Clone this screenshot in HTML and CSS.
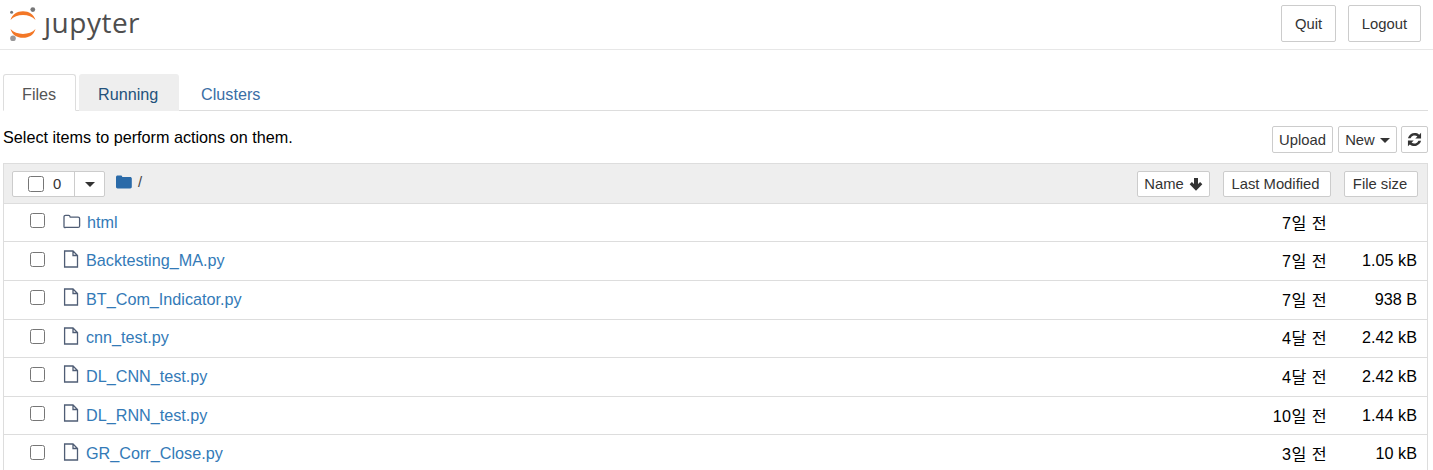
FILE: index.html
```html
<!DOCTYPE html>
<html lang="en">

<head>
    <meta charset="UTF-8">
    <title>Home Page - Select or create a notebook</title>
    <link rel="stylesheet" href="styles.css">
</head>

<body>
    <!-- Header -->
    <header class="site-header">
        <a class="logo" href="#">
            <svg class="logo-mark" viewBox="0 0 30 36" width="30" height="36">
                <path d="M2.500 15C4.200 9 9 6.200 15 6.200S25.800 9 27.500 15C24.400 11.600 20 10.100 15 10.100S5.600 11.600 2.500 15z" fill="#f37726" />
                <path d="M2.500 24C4.200 30 9 32.800 15 32.800S25.800 30 27.500 24C24.400 27.400 20 28.900 15 28.900S5.600 27.400 2.500 24z" fill="#f37726" />
                <circle cx="24.800" cy="4.600" r="2.400" fill="#767677" />
                <circle cx="3.600" cy="7.200" r="1.500" fill="#767677" />
                <circle cx="5" cy="33.400" r="2.800" fill="#989798" />
            </svg>
            <span class="logo-text"><span class="logo-j">j</span>upyter</span>
        </a>
        <div class="header-btns">
            <button class="btn btn-quit">Quit</button>
            <button class="btn btn-logout">Logout</button>
        </div>
    </header>

    <main class="container">
        <!-- Tabs -->
        <ul class="tabs">
            <li class="tab active"><a href="#">Files</a></li>
            <li class="tab muted"><a href="#">Running</a></li>
            <li class="tab"><a href="#">Clusters</a></li>
        </ul>

        <!-- Toolbar -->
        <div class="toolbar">
            <span class="toolbar-text">Select items to perform actions on them.</span>
            <div class="toolbar-btns">
                <button class="btn btn-upload">Upload</button>
                <button class="btn btn-new">New <span class="caret"></span></button>
                <button class="btn btn-refresh" aria-label="Refresh">
                    <svg viewBox="0 0 16 16" width="15" height="15">
                        <path d="M15 .8v6.200H8.800l2.300-2.300A4.700 4.700 0 0 0 3.800 6.600H1a7.400 7.400 0 0 1 12-3.800z" fill="#333" />
                        <path d="M1 15.200V9h6.200l-2.300 2.300a4.700 4.700 0 0 0 7.300-1.900H15a7.400 7.400 0 0 1-12 3.800z" fill="#333" />
                    </svg>
                </button>
            </div>
        </div>

        <!-- File list -->
        <section class="file-list">
            <div class="list-header">
                <div class="select-group">
                    <label class="select-count"><input type="checkbox" class="check-all"> <span>0</span></label>
                    <span class="select-drop"><span class="caret"></span></span>
                </div>
                <svg class="crumb-icon" viewBox="0 0 16 14" width="16" height="14">
                    <path d="M0 2.200C0 1.200.7.500 1.600.500h3.200c.9 0 1.500.7 1.500 1.500h7.900c.9 0 1.600.700 1.600 1.600v8.200c0 .9-.7 1.600-1.600 1.600H1.600C.7 13.400 0 12.700 0 11.800z" fill="#2a6aa8" />
                </svg>
                <span class="crumb-sep">/</span>
                <div class="sort-btns">
                    <button class="btn btn-sort btn-name">Name
                        <svg viewBox="0 0 14 14" width="14" height="14">
                            <path d="M7 1v9.500" fill="none" stroke="#333" stroke-width="4" />
                            <path d="M1.800 6.200l5.200 5.200 5.200-5.200" fill="none" stroke="#333" stroke-width="3.200" />
                        </svg>
                    </button>
                    <button class="btn btn-sort btn-modified">Last Modified</button>
                    <button class="btn btn-sort btn-size">File size</button>
                </div>
            </div>

            <div class="row row-folder">
                <input type="checkbox" class="row-check">
                <svg class="row-icon" viewBox="0 0 18 15" width="18" height="15">
                    <path d="M1 3c0-1 .7-1.600 1.500-1.600h3.200c.9 0 1.300.8 1.500 1.700h7.900c.9 0 1.500.7 1.500 1.500v7.300c0 .9-.7 1.500-1.500 1.500H2.500C1.700 13.900 1 13.300 1 12.400z" fill="none" stroke="#4f5d75" stroke-width="1.300" />
                </svg>
                <a class="row-name" href="#">html</a>
                <span class="row-date">7일 전</span>
                <span class="row-size"></span>
            </div>
            <div class="row">
                <input type="checkbox" class="row-check">
                <svg class="row-icon" viewBox="0 0 16 18" width="16" height="18">
                    <path d="M1.600 1h8.400l4.500 4.500v11.500H1.600zM10 1v4.500h4.500" fill="none" stroke="#4f5d75" stroke-width="1.300" />
                </svg>
                <a class="row-name" href="#">Backtesting_MA.py</a>
                <span class="row-date">7일 전</span>
                <span class="row-size">1.05 kB</span>
            </div>
            <div class="row">
                <input type="checkbox" class="row-check">
                <svg class="row-icon" viewBox="0 0 16 18" width="16" height="18">
                    <path d="M1.600 1h8.400l4.500 4.500v11.500H1.600zM10 1v4.500h4.500" fill="none" stroke="#4f5d75" stroke-width="1.300" />
                </svg>
                <a class="row-name" href="#">BT_Com_Indicator.py</a>
                <span class="row-date">7일 전</span>
                <span class="row-size">938 B</span>
            </div>
            <div class="row">
                <input type="checkbox" class="row-check">
                <svg class="row-icon" viewBox="0 0 16 18" width="16" height="18">
                    <path d="M1.600 1h8.400l4.500 4.500v11.500H1.600zM10 1v4.500h4.500" fill="none" stroke="#4f5d75" stroke-width="1.300" />
                </svg>
                <a class="row-name" href="#">cnn_test.py</a>
                <span class="row-date">4달 전</span>
                <span class="row-size">2.42 kB</span>
            </div>
            <div class="row">
                <input type="checkbox" class="row-check">
                <svg class="row-icon" viewBox="0 0 16 18" width="16" height="18">
                    <path d="M1.600 1h8.400l4.500 4.500v11.500H1.600zM10 1v4.500h4.500" fill="none" stroke="#4f5d75" stroke-width="1.300" />
                </svg>
                <a class="row-name" href="#">DL_CNN_test.py</a>
                <span class="row-date">4달 전</span>
                <span class="row-size">2.42 kB</span>
            </div>
            <div class="row">
                <input type="checkbox" class="row-check">
                <svg class="row-icon" viewBox="0 0 16 18" width="16" height="18">
                    <path d="M1.600 1h8.400l4.500 4.500v11.500H1.600zM10 1v4.500h4.500" fill="none" stroke="#4f5d75" stroke-width="1.300" />
                </svg>
                <a class="row-name" href="#">DL_RNN_test.py</a>
                <span class="row-date">10일 전</span>
                <span class="row-size">1.44 kB</span>
            </div>
            <div class="row">
                <input type="checkbox" class="row-check">
                <svg class="row-icon" viewBox="0 0 16 18" width="16" height="18">
                    <path d="M1.600 1h8.400l4.500 4.500v11.500H1.600zM10 1v4.500h4.500" fill="none" stroke="#4f5d75" stroke-width="1.300" />
                </svg>
                <a class="row-name" href="#">GR_Corr_Close.py</a>
                <span class="row-date">3일 전</span>
                <span class="row-size">10 kB</span>
            </div>
        </section>
    </main>
</body>

</html>
```

FILE: styles.css
```css
* {
    margin: 0;
    padding: 0;
    box-sizing: border-box;
    font-family: 'Liberation Sans', 'Noto Sans CJK KR', sans-serif;
}

html,
body {
    height: 470px;
    overflow: hidden;
}

body {
    background-color: #fff;
    color: #000;
    font-size: 16.2px;
}

a {
    color: #337ab7;
    text-decoration: none;
}

/* Header */
.site-header {
    display: flex;
    justify-content: space-between;
    align-items: flex-start;
    height: 50px;
    padding: 5px 12px 0 8px;
    border-bottom: 1px solid #e7e7e7;
}

.logo {
    display: flex;
    align-items: flex-start;
    gap: 6px;
}

.logo-text {
    font-family: 'Open Sans', sans-serif;
    font-size: 28px;
    line-height: 34px;
    color: #4e4e4e;
    letter-spacing: 0.5px;
}

.logo-j {
    display: inline-block;
    font-family: inherit;
    clip-path: inset(32% -5px -5px -5px);
}

.header-btns {
    display: flex;
    gap: 12px;
}

/* Buttons */
.btn {
    background-color: #fff;
    border: 1px solid #ccc;
    border-radius: 2px;
    color: #333;
    font-size: 14.8px;
    cursor: pointer;
}

.btn-quit {
    width: 55px;
    height: 37px;
}

.btn-logout {
    width: 73px;
    height: 37px;
}

/* Tabs */
.container {
    padding: 0 5px 0 3px;
}

.tabs {
    list-style: none;
    display: flex;
    gap: 3px;
    height: 61px;
    padding-top: 24px;
    border-bottom: 1px solid #ddd;
}

.tab {
    height: 37px;
    padding: 0 18px;
    line-height: 38px;
    border: 1px solid transparent;
    border-radius: 3px 3px 0 0;
}

.tab a {
    color: #3a6ea5;
}

.tab.active {
    width: 73px;
    background-color: #fff;
    border-color: #ddd #ddd #fff;
}

.tab.active a {
    color: #555;
}

.tab.muted {
    width: 100px;
    background-color: #eee;
}

.tab.muted a {
    color: #23527c;
}

/* Toolbar */
.toolbar {
    display: flex;
    justify-content: space-between;
    align-items: flex-start;
    height: 52px;
    padding-top: 15px;
}

.toolbar-text {
    line-height: 23px;
}

.toolbar-btns {
    display: flex;
    gap: 5px;
}

.toolbar-btns .btn {
    height: 27px;
}

.btn-upload {
    width: 61px;
}

.btn-new {
    width: 59px;
    margin-right: -1px;
}

.btn-refresh {
    width: 27px;
    display: flex;
    align-items: center;
    justify-content: center;
}

.caret {
    display: inline-block;
    width: 0;
    height: 0;
    margin-left: 1px;
    vertical-align: middle;
    border-top: 5px solid #333;
    border-left: 5px solid transparent;
    border-right: 5px solid transparent;
}

/* File list */
.file-list {
    border: 1px solid #ddd;
    border-bottom: 0;
}

.list-header {
    display: flex;
    align-items: flex-start;
    height: 39.8px;
    padding: 7px 9px 0 8px;
    background-color: #eee;
    border-bottom: 1px solid #ddd;
}

.select-group {
    display: flex;
    height: 26px;
    width: 93px;
    background-color: #fff;
    border: 1px solid #ccc;
    border-radius: 2px;
}

.select-count {
    display: flex;
    align-items: center;
    gap: 9px;
    width: 62px;
    padding-left: 15px;
    font-size: 14.8px;
    color: #333;
    border-right: 1px solid #ccc;
}

.check-all {
    width: 16px;
    height: 16px;
}

.select-drop {
    flex: 1;
    display: flex;
    align-items: center;
    justify-content: center;
}

.crumb-icon {
    margin: 4px 0 0 11px;
}

.crumb-sep {
    margin: 3px 0 0 6px;
    font-size: 14.8px;
    color: #444;
}

.sort-btns {
    display: flex;
    margin-left: auto;
}

.btn-sort {
    height: 26px;
}

.btn-name {
    display: flex;
    align-items: center;
    justify-content: center;
    gap: 5px;
    width: 73px;
    margin-right: 13px;
}

.btn-modified {
    width: 108px;
    padding-right: 3px;
    margin-right: 13px;
}

.btn-size {
    width: 74px;
    padding-right: 2px;
}

/* File rows */
.row {
    display: flex;
    align-items: center;
    height: 38.6px;
    padding-right: 10px;
    border-bottom: 1px solid #ddd;
}

.row-check {
    width: 15px;
    height: 15px;
    margin: -4px 18px 0 26px;
    flex-shrink: 0;
}

.row-icon {
    flex-shrink: 0;
    margin-right: 7px;
    margin-top: -5px;
}

.row-folder .row-icon {
    margin-top: -3px;
    margin-right: 6px;
}

.row-name {
    flex: 1;
    margin-top: -1px;
}

.row-date {
    width: 100px;
    margin-top: -2px;
    letter-spacing: 0.4px;
    text-align: right;
}

.row-size {
    width: 90px;
    margin-top: -1px;
    text-align: right;
}
```
